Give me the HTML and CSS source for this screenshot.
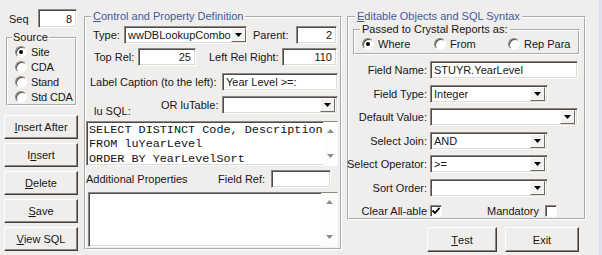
FILE: index.html
```html
<!DOCTYPE html>
<html>
<head>
<meta charset="utf-8">
<link rel="stylesheet" href="styles.css">
</head>
<body>
<div class="app">
  <div class="left">
    <div class="seq">
      <span class="seq-label">Seq</span>
      <div class="input num seq-input">8</div>
    </div>
    <fieldset class="group source">
      <legend>Source</legend>
      <div class="src-row"><span class="radio on"></span>Site</div>
      <div class="src-row"><span class="radio"></span>CDA</div>
      <div class="src-row"><span class="radio"></span>Stand</div>
      <div class="src-row"><span class="radio"></span>Std CDA</div>
    </fieldset>
    <div class="btn-col">
      <div class="btn side-btn"><u>I</u>nsert After</div>
      <div class="btn side-btn">I<u>n</u>sert</div>
      <div class="btn side-btn"><u>D</u>elete</div>
      <div class="btn side-btn"><u>S</u>ave</div>
      <div class="btn side-btn"><u>V</u>iew SQL</div>
    </div>
  </div>

  <fieldset class="group mid">
    <legend class="blue"><u>C</u>ontrol and Property Definition</legend>
    <div class="row r1">
      <span class="lbl l-type">Type:</span>
      <div class="input combo c-type"><span class="val">wwDBLookupCombo</span><span class="dd"><svg width="7" height="4" viewBox="0 0 7 4"><polygon points="0,0 7,0 3.5,4" fill="#000"/></svg></span></div>
      <span class="lbl l-parent">Parent:</span>
      <div class="input num i-parent">2</div>
    </div>
    <div class="row r2">
      <span class="lbl l-top">Top Rel:</span>
      <div class="input num i-top">25</div>
      <span class="lbl l-leftrel">Left Rel Right:</span>
      <div class="input num i-leftrel">110</div>
    </div>
    <div class="row r3">
      <span class="lbl l-caption">Label Caption (to the left):</span>
      <div class="input text i-caption">Year Level &gt;=:</div>
    </div>
    <div class="row r4">
      <span class="lbl l-lusql">lu SQL:</span>
      <span class="lbl l-lutable">OR luTable:</span>
      <div class="input combo c-lutable"><span class="val"></span><span class="dd"><svg width="7" height="4" viewBox="0 0 7 4"><polygon points="0,0 7,0 3.5,4" fill="#000"/></svg></span></div>
    </div>
    <div class="input textarea ta1">
      <div class="code">SELECT DISTINCT Code, Description
FROM luYearLevel
ORDER BY YearLevelSort</div>
      <div class="vscroll">
        <svg width="7" height="4" viewBox="0 0 7 4"><polygon points="0,4 7,4 3.5,0" fill="#8c8c8c"/></svg>
        <svg width="7" height="4" viewBox="0 0 7 4"><polygon points="0,0 7,0 3.5,4" fill="#8c8c8c"/></svg>
      </div>
    </div>
    <div class="row r6">
      <span class="lbl l-addl">Additional Properties</span>
      <span class="lbl l-fieldref">Field Ref:</span>
      <div class="input text i-fieldref"></div>
    </div>
    <div class="input textarea ta2">
      <div class="code"></div>
      <div class="vscroll">
        <svg width="7" height="4" viewBox="0 0 7 4"><polygon points="0,4 7,4 3.5,0" fill="#8c8c8c"/></svg>
        <svg width="7" height="4" viewBox="0 0 7 4"><polygon points="0,0 7,0 3.5,4" fill="#8c8c8c"/></svg>
      </div>
    </div>
  </fieldset>

  <div class="right">
    <fieldset class="group edit">
      <legend class="blue"><u>E</u>ditable Objects and SQL Syntax</legend>
      <fieldset class="group passed">
        <legend>Passed to Crystal Reports as:</legend>
        <div class="pass-row">
          <div class="pass-item p1"><span class="radio on"></span>Where</div>
          <div class="pass-item p2"><span class="radio"></span>From</div>
          <div class="pass-item p3"><span class="radio"></span>Rep Para</div>
        </div>
      </fieldset>
      <div class="form">
        <span class="flbl">Field Name:</span>
        <div class="input text wide">STUYR.YearLevel</div>

        <span class="flbl">Field Type:</span>
        <div class="input combo short"><span class="val">Integer</span><span class="dd"><svg width="7" height="4" viewBox="0 0 7 4"><polygon points="0,0 7,0 3.5,4" fill="#000"/></svg></span></div>

        <span class="flbl">Default Value:</span>
        <div class="input combo wide"><span class="val"></span><span class="dd"><svg width="7" height="4" viewBox="0 0 7 4"><polygon points="0,0 7,0 3.5,4" fill="#000"/></svg></span></div>

        <span class="flbl">Select Join:</span>
        <div class="input combo short"><span class="val">AND</span><span class="dd"><svg width="7" height="4" viewBox="0 0 7 4"><polygon points="0,0 7,0 3.5,4" fill="#000"/></svg></span></div>

        <span class="flbl">Select Operator:</span>
        <div class="input combo short"><span class="val">&gt;=</span><span class="dd"><svg width="7" height="4" viewBox="0 0 7 4"><polygon points="0,0 7,0 3.5,4" fill="#000"/></svg></span></div>

        <span class="flbl">Sort Order:</span>
        <div class="input combo short"><span class="val"></span><span class="dd"><svg width="7" height="4" viewBox="0 0 7 4"><polygon points="0,0 7,0 3.5,4" fill="#000"/></svg></span></div>
      </div>
      <div class="checks">
        <span class="flbl">Clear All-able</span>
        <span class="check"><svg width="10" height="10" viewBox="0 0 10 10"><path d="M1.5 4.5 L4 7 L8.5 1.8" fill="none" stroke="#000" stroke-width="1.8"/></svg></span>
        <span class="lbl l-mand">Mandatory</span>
        <span class="check mand"></span>
      </div>
    </fieldset>
    <div class="actions">
      <div class="btn act test"><u>T</u>est</div>
      <div class="btn act exit">Exit</div>
    </div>
  </div>
  <div class="edge"></div>
</div>
</body>
</html>
```
FILE: styles.css
```css
* { box-sizing: border-box; }
html, body { margin: 0; padding: 0; }
body {
  width: 602px;
  height: 255px;
  overflow: hidden;
  background: #f0eeed;
  font-family: "Liberation Sans", Arial, sans-serif;
  font-size: 11px;
  color: #161616;
}
u { text-decoration: underline; text-underline-offset: 1px; }

.app { display: flex; align-items: flex-start; height: 255px; }

/* group boxes */
.group {
  margin: 0;
  padding: 0;
  border: 2px groove #ffffff;
  min-width: 0;
}
legend {
  padding: 0 2px;
  line-height: 13px;
  font-size: 11px;
  white-space: nowrap;
}
legend.blue { color: #3f5a9c; }

/* sunken inputs */
.input {
  background: #fff;
  border: 1px solid;
  border-color: #8d8883 #fbfbfa #fbfbfa #8d8883;
  box-shadow: inset 1px 1px 0 #4f4b48, inset -1px -1px 0 #dedad6;
  height: 18px;
  flex: none;
  display: flex;
  align-items: center;
  overflow: hidden;
  white-space: nowrap;
  line-height: 14px;
}
.input.num { justify-content: flex-end; padding-right: 4px; }
.input.text { padding-left: 3px; }
.combo { padding: 2px 2px 2px 3px; }
.combo .val { flex: 1; }
.dd {
  width: 15px;
  height: 14px;
  flex: none;
  display: flex;
  align-items: center;
  justify-content: center;
  background: #f3f2f0;
  border: 1px solid;
  border-color: #fdfdfd #6e6a66 #6e6a66 #fdfdfd;
}

/* buttons */
.btn {
  background: #f0eeed;
  border: 1px solid;
  border-color: #ffffff #3f3c3a #3f3c3a #ffffff;
  box-shadow: inset -1px -1px 0 #8d8883;
  display: flex;
  align-items: center;
  justify-content: center;
  white-space: nowrap;
}

/* radios / checks */
.radio {
  width: 12px;
  height: 12px;
  flex: none;
  border-radius: 50%;
  background: #fff;
  border: 1px solid;
  border-color: #8d8883 #fbfbfa #fbfbfa #8d8883;
  box-shadow: inset 1px 1px 0 #4f4b48;
  display: flex;
  align-items: center;
  justify-content: center;
}
.radio.on::after {
  content: "";
  width: 4px;
  height: 4px;
  border-radius: 50%;
  background: #000;
}
.check {
  width: 12px;
  height: 12px;
  flex: none;
  background: #fff;
  border: 1px solid;
  border-color: #8d8883 #fbfbfa #fbfbfa #8d8883;
  box-shadow: inset 1px 1px 0 #4f4b48;
  display: flex;
  align-items: center;
  justify-content: center;
}

/* left column */
.left { width: 75px; margin-left: 4px; display: flex; flex-direction: column; flex: none; }
.seq { margin-top: 9px; height: 19px; display: flex; align-items: center; }
.seq-label { width: 34px; padding-left: 5px; }
.seq-input { width: 39px; height: 19px; }
.source { margin: 3px 0 0 2px; width: 71px; }
.source legend { margin-left: 4px; padding: 0 1px; }
.src-row { height: 15px; display: flex; align-items: center; padding-left: 7px; gap: 4px; letter-spacing: -0.15px; white-space: nowrap; }
.btn-col { margin-top: 9px; display: flex; flex-direction: column; gap: 4px; }
.side-btn { width: 74px; height: 24px; }

/* middle group */
.mid { margin: 10px 0 0 5px; width: 258px; height: 240px; flex: none; }
.mid legend { margin-left: 5px; }
.row { display: flex; align-items: center; height: 18px; }
.lbl { flex: none; white-space: nowrap; }
.r1 { margin-top: 3px; }
.r2 { margin-top: 4px; }
.r3 { margin-top: 7px; }
.r4 { margin-top: 5px; }
.r6 { margin-top: 4px; }
.l-type { margin-left: 7px; width: 31px; }
.c-type { width: 123px; }
.l-parent { margin-left: 6px; width: 43px; }
.i-parent { width: 41px; }
.l-top { margin-left: 8px; width: 44px; }
.i-top { width: 58px; }
.l-leftrel { margin-left: 13px; width: 73px; }
.i-leftrel { width: 55px; }
.l-caption { margin-left: 4px; width: 132px; }
.i-caption { width: 116px; }
.l-lusql { margin-left: 8px; width: 67px; align-self: flex-end; margin-bottom: -3px; }
.l-lutable { width: 61px; }
.c-lutable { width: 116px; }
.l-addl { width: 132px; }
.l-fieldref { width: 53px; }
.i-fieldref { width: 60px; }

.textarea { align-items: stretch; }
.ta1 { margin-top: 7px; width: 252px; height: 45px; }
.ta2 { margin-top: 4px; margin-left: 2px; width: 250px; height: 55px; }
.code {
  flex: 1;
  padding: 1px 0 0 2px;
  font-family: "Liberation Mono", "Courier New", monospace;
  font-size: 11.8px;
  line-height: 14.4px;
  white-space: pre;
  color: #111;
}
.vscroll {
  width: 16px;
  flex: none;
  display: flex;
  flex-direction: column;
  align-items: center;
  justify-content: space-between;
  padding: 7px 0 7px;
  background: #fdfdfc;
}

/* right group */
.right { width: 239px; margin-left: 5px; flex: none; display: flex; flex-direction: column; }
.edit { margin-top: 10px; height: 210px; }
.edit legend { margin-left: 6px; }
.passed { margin-left: 4px; width: 227px; padding-bottom: 2px; }
.passed legend { margin-left: 5px; }
.pass-row { display: flex; height: 15px; align-items: center; }
.pass-item { display: flex; align-items: center; gap: 4px; }
.p1 { margin-left: 7px; width: 72px; }
.p2 { width: 74px; }
.form {
  margin: 6px 0 0 -2px;
  display: grid;
  grid-template-columns: 80px auto;
  grid-auto-rows: 18px;
  column-gap: 3px;
  row-gap: 5.6px;
  align-items: center;
}
.flbl { text-align: right; white-space: nowrap; }
.form .wide { width: 148px; }
.form .short { width: 118px; }
.checks { margin: 6px 0 0 -2px; display: flex; align-items: center; height: 16px; }
.checks .flbl { width: 80px; margin-right: 3px; }
.l-mand { margin-left: 45px; }
.check.mand { margin-left: 6px; }

.actions { margin-top: 7px; display: flex; }
.act { height: 25px; }
.test { margin-left: 80px; width: 70px; }
.exit { margin-left: 8px; width: 74px; }

.edge { margin-left: auto; width: 3px; height: 255px; background: #dfe0ee; flex: none; }
```
